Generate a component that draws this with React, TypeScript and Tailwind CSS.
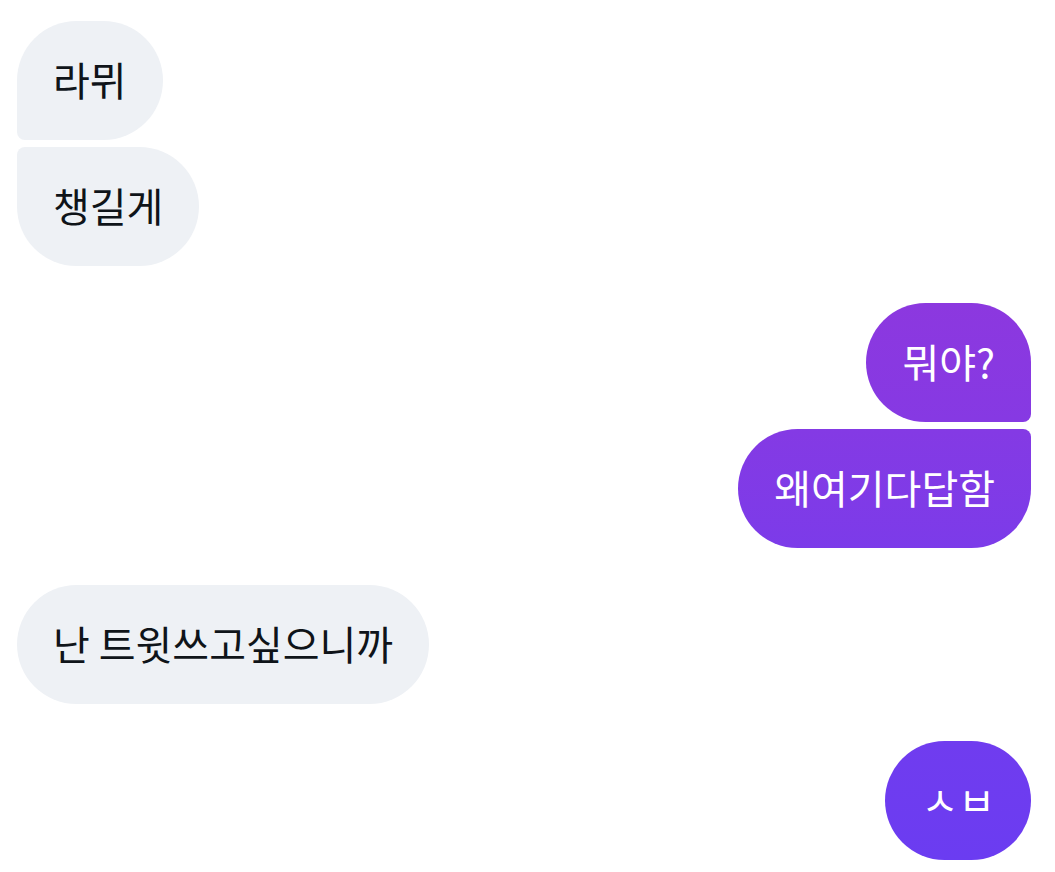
const font = {
  fontFamily: '"Noto Sans CJK KR", "Noto Sans", sans-serif',
};

type Msg = {
  text: string;
  mine: boolean;
  shape: string;
  bg: string;
};

const messages: Msg[][] = [
  [
    { text: "라뮈", mine: false, shape: "rounded-[60px] rounded-bl-[8px]", bg: "" },
    { text: "챙길게", mine: false, shape: "rounded-[60px] rounded-tl-[8px]", bg: "" },
  ],
  [
    { text: "뭐야?", mine: true, shape: "rounded-[60px] rounded-br-[8px]", bg: "bg-gradient-to-b from-[#8c38df] to-[#8639e3]" },
    { text: "왜여기다답함", mine: true, shape: "rounded-[60px] rounded-tr-[8px]", bg: "bg-gradient-to-b from-[#843ae4] to-[#7c3be9]" },
  ],
  [{ text: "난 트윗쓰고싶으니까", mine: false, shape: "rounded-[60px]", bg: "" }],
  [{ text: "ㅅㅂ", mine: true, shape: "rounded-[60px]", bg: "bg-gradient-to-b from-[#703cef] to-[#6b3cf1]" }],
];

function Bubble({ m }: { m: Msg }) {
  return (
    <div
      className={`h-[119px] flex items-center px-[36px] pb-[4px] text-[40px] leading-none ${m.shape} ${
        m.mine ? `${m.bg} text-white` : "bg-[#eef1f5] text-[#0f1419]"
      }`}
    >
      {m.text}
    </div>
  );
}

export default function App() {
  return (
    <div className="w-[1055px] h-[872px] bg-white overflow-hidden" style={font}>
      <div className="flex flex-col gap-[37px] pt-[21px] pl-[17px] pr-[24px]">
        {messages.map((group, i) => (
          <div
            key={i}
            className={`flex flex-col gap-[7px] ${group[0].mine ? "items-end" : "items-start"}`}
          >
            {group.map((m, j) => (
              <Bubble key={j} m={m} />
            ))}
          </div>
        ))}
      </div>
    </div>
  );
}
